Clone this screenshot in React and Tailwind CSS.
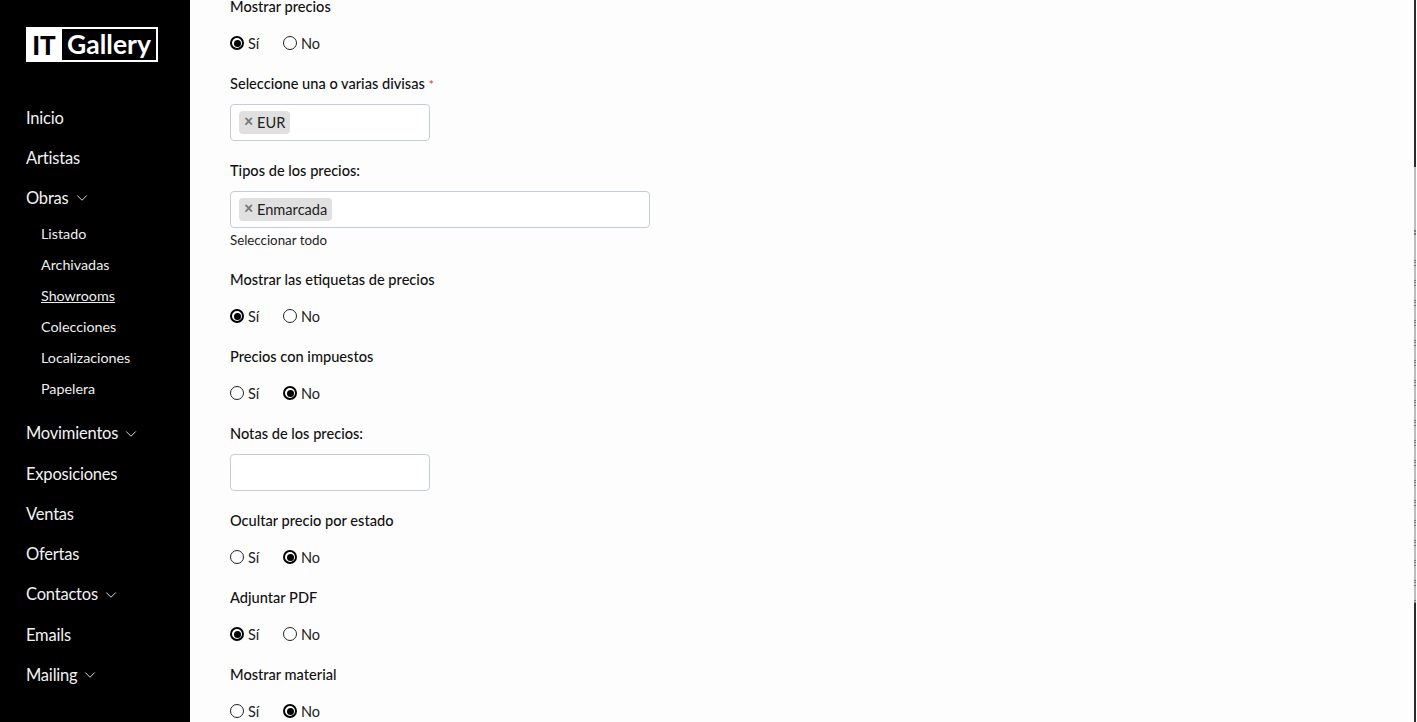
import React from "react";
import { ChevronDown } from "lucide-react";

const Radio = ({ checked, label }) => (
  <span className="flex items-center">
    {checked ? (
      <span className="w-[14px] h-[14px] rounded-full border-2 border-black bg-white flex items-center justify-center">
        <span className="w-[7px] h-[7px] rounded-full bg-black"></span>
      </span>
    ) : (
      <span className="w-[14px] h-[14px] rounded-full border border-[#222] bg-white"></span>
    )}
    <span className="ml-1 mt-px text-[14.5px] leading-5 text-[#222]">{label}</span>
  </span>
);

const RadioField = ({ title, yes, first }) => (
  <div className="mb-[21px]">
    <label className={`block text-[14.6px] font-medium text-[#111] ${first ? "h-[14px] leading-[14px] mb-[19px]" : "h-5 leading-[20px] mb-4"}`}>{title}</label>
    <div className="flex h-5 items-center">
      <div className="w-[53px]"><Radio checked={yes} label="Sí" /></div>
      <Radio checked={!yes} label="No" />
    </div>
  </div>
);

const Tag = ({ children }) => (
  <span className="inline-flex items-center h-[23px] bg-[#e0e0e0] rounded pl-[5px] pr-[5px] text-[14.6px] text-[#222]">
    <span className="w-[13px] -mt-[3px] text-[16px] font-black leading-none text-[#777]">×</span>
    <span className="mt-px">{children}</span>
  </span>
);

const MainNav = ({ children, arrow, top }) => (
  <a className={`flex items-center text-[16.5px] tracking-[-0.2px] text-[#f2f2f2] ${top ? "h-10" : "h-[40.3px]"}`}>
    {children}
    {arrow && <ChevronDown className="ml-1 w-[18px] h-[18px]" strokeWidth={1.2} />}
  </a>
);

const subItems = ["Listado", "Archivadas", "Showrooms", "Colecciones", "Localizaciones", "Papelera"];

export default function App() {
  return (
    <div className="flex h-screen overflow-hidden bg-[#fdfdfd] font-['Lato',sans-serif]">
      {/* Sidebar */}
      <aside className="w-[190px] shrink-0 bg-black pt-[27px] pl-[26px]">
        <div className="flex w-[132px] h-[35px] bg-white mb-[36px]">
          <span className="w-[36px] flex items-center justify-center text-[26px] font-black leading-none text-black">IT</span>
          <span className="flex-1 m-[2px] ml-0 bg-black flex items-center justify-center text-[26.5px] font-bold leading-none text-white">Gallery</span>
        </div>
        <nav>
          <MainNav top>Inicio</MainNav>
          <MainNav top>Artistas</MainNav>
          <MainNav top arrow>Obras</MainNav>
          <ul className="pl-[15px] mb-[9.5px]">
            {subItems.map((item) => (
              <li key={item} className={`h-[31px] leading-[31px] text-[14.3px] text-[#eee] ${item === "Showrooms" ? "underline" : ""}`}>
                {item}
              </li>
            ))}
          </ul>
          <MainNav arrow>Movimientos</MainNav>
          <MainNav>Exposiciones</MainNav>
          <MainNav>Ventas</MainNav>
          <MainNav>Ofertas</MainNav>
          <MainNav arrow>Contactos</MainNav>
          <MainNav>Emails</MainNav>
          <MainNav arrow>Mailing</MainNav>
        </nav>
      </aside>

      {/* Form */}
      <main className="flex-1 pl-10">
        <RadioField first title="Mostrar precios" yes />

        <div className="mb-5">
          <label className="block h-5 leading-[20px] mb-2.5 text-[14.6px] font-medium text-[#111]">
            Seleccione una o varias divisas<span className="ml-1 text-red-500 text-[12px]">*</span>
          </label>
          <div className="w-[200px] h-[37px] bg-white border border-[#c5cdd8] rounded flex items-center pl-2">
            <Tag>EUR</Tag>
          </div>
        </div>

        <div className="mb-5">
          <label className="block h-5 leading-[20px] mb-2.5 text-[14.6px] font-medium text-[#111]">Tipos de los precios:</label>
          <div className="w-[420px] h-[37px] bg-white border border-[#c5cdd8] rounded flex items-center pl-2">
            <Tag>Enmarcada</Tag>
          </div>
          <p className="h-5 mt-[2px] leading-5 text-[13.3px] text-[#222]">Seleccionar todo</p>
        </div>

        <RadioField title="Mostrar las etiquetas de precios" yes />
        <RadioField title="Precios con impuestos" />

        <div className="mb-5">
          <label className="block h-5 leading-[20px] mb-2.5 text-[14.6px] font-medium text-[#111]">Notas de los precios:</label>
          <div className="w-[200px] h-[37px] bg-white border border-[#c5cdd8] rounded"></div>
        </div>

        <RadioField title="Ocultar precio por estado" />
        <RadioField title="Adjuntar PDF" yes />
        <RadioField title="Mostrar material" />
      </main>

      {/* Scrollbar strip */}
      <div className="w-[3px] shrink-0 flex flex-col pr-px">
        <div className="h-[167px] bg-[#2b2b2b]"></div>
        <div className="h-[63px] bg-[#bdbdbd]"></div>
        <div className="h-[30px] bg-[#bdbdbd] bg-[repeating-linear-gradient(#777_0,#777_2px,#bdbdbd_2px,#bdbdbd_3px)] bg-[length:100%_6px] bg-no-repeat"></div>
        <div className="h-[343px] bg-[repeating-linear-gradient(#777_0,#777_1px,#bdbdbd_1px,#bdbdbd_2px,#777_2px,#777_3px,#bdbdbd_3px,#bdbdbd_5px,#777_5px,#777_6px,#bdbdbd_6px,#bdbdbd_20px)]"></div>
        <div className="flex-1 bg-[#2b2b2b]"></div>
      </div>
    </div>
  );
}
